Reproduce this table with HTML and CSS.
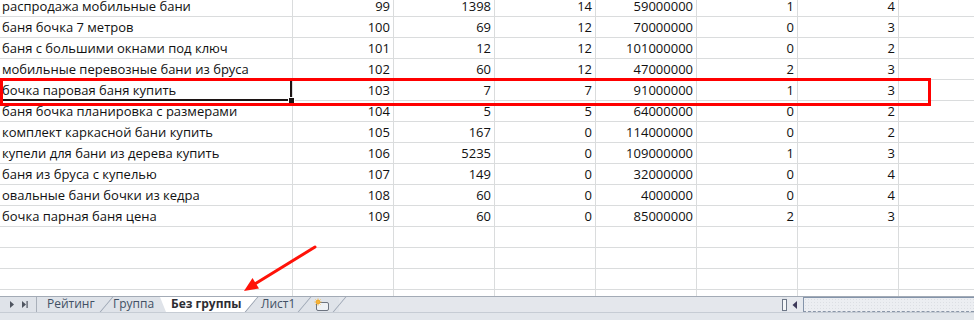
FILE: index.html
```html
<!DOCTYPE html>
<html>
<head>
<meta charset="utf-8">
<link rel="stylesheet" href="styles.css">
</head>
<body>
<div class="sheet">
  <div class="grid">
    <div class="t">распродажа мобильные бани</div><div class="n">99</div><div class="n">1398</div><div class="n">14</div><div class="n">59000000</div><div class="n">1</div><div class="n">4</div><div></div>
    <div class="t">баня бочка 7 метров</div><div class="n">100</div><div class="n">69</div><div class="n">12</div><div class="n">70000000</div><div class="n">0</div><div class="n">3</div><div></div>
    <div class="t">баня с большими окнами под ключ</div><div class="n">101</div><div class="n">12</div><div class="n">12</div><div class="n">101000000</div><div class="n">0</div><div class="n">2</div><div></div>
    <div class="t">мобильные перевозные бани из бруса</div><div class="n">102</div><div class="n">60</div><div class="n">12</div><div class="n">47000000</div><div class="n">2</div><div class="n">3</div><div></div>
    <div class="t">бочка паровая баня купить</div><div class="n">103</div><div class="n">7</div><div class="n">7</div><div class="n">91000000</div><div class="n">1</div><div class="n">3</div><div></div>
    <div class="t">баня бочка планировка с размерами</div><div class="n">104</div><div class="n">5</div><div class="n">5</div><div class="n">64000000</div><div class="n">0</div><div class="n">2</div><div></div>
    <div class="t">комплект каркасной бани купить</div><div class="n">105</div><div class="n">167</div><div class="n">0</div><div class="n">114000000</div><div class="n">0</div><div class="n">2</div><div></div>
    <div class="t">купели для бани из дерева купить</div><div class="n">106</div><div class="n">5235</div><div class="n">0</div><div class="n">109000000</div><div class="n">1</div><div class="n">3</div><div></div>
    <div class="t">баня из бруса с купелью</div><div class="n">107</div><div class="n">149</div><div class="n">0</div><div class="n">32000000</div><div class="n">0</div><div class="n">4</div><div></div>
    <div class="t">овальные бани бочки из кедра</div><div class="n">108</div><div class="n">60</div><div class="n">0</div><div class="n">4000000</div><div class="n">0</div><div class="n">4</div><div></div>
    <div class="t">бочка парная баня цена</div><div class="n">109</div><div class="n">60</div><div class="n">0</div><div class="n">85000000</div><div class="n">2</div><div class="n">3</div><div></div>
    <div></div><div></div><div></div><div></div><div></div><div></div><div></div><div></div>
    <div></div><div></div><div></div><div></div><div></div><div></div><div></div><div></div>
    <div></div><div></div><div></div><div></div><div></div><div></div><div></div><div></div>
    <div></div><div></div><div></div><div></div><div></div><div></div><div></div><div></div>
  </div>
  <div class="selection"><span class="handle"></span></div>
  <div class="redbox"></div>
  <svg class="arrow" width="974" height="296" viewBox="0 0 974 296">
    <line x1="315" y1="247" x2="254" y2="284.5" stroke="#ff1208" stroke-width="3" stroke-linecap="round"/>
    <polygon points="244,291 259,288.5 252.5,278" fill="#ff1208"/>
  </svg>
</div>
<div class="tabbar">
  <div class="nav">
    <svg width="36" height="15" viewBox="0 0 36 15">
      <polygon points="10,4 14,7.5 10,11" fill="#4f5560"/>
      <polygon points="22,4 26,7.5 22,11" fill="#4f5560"/>
      <rect x="26.5" y="4" width="1.2" height="7" fill="#4f5560"/>
    </svg>
  </div>
  <div class="tabs">
    <div class="tab t1 sep">Рейтинг</div>
    <div class="tab t2">Группа</div>
    <div class="tab active">Без группы</div>
    <div class="tab t4 sep lead">Лист1</div>
    <div class="tab t5 sep newtab">
      <svg width="17" height="14" viewBox="0 0 17 14">
        <rect x="3.5" y="4.5" width="12" height="8" rx="1.5" fill="#eef1f5" stroke="#6d7480"/>
        <circle cx="5" cy="4" r="2.2" fill="#f0a020"/>
        <path d="M5 0.5v7M1.5 4h7M2.5 1.5l5 5M7.5 1.5l-5 5" stroke="#f3b43c" stroke-width="0.9"/>
      </svg>
    </div>
  </div>
  <div class="hfill"></div>
  <div class="splitter"></div>
  <div class="leftbtn"><svg width="8" height="10" viewBox="0 0 8 10"><polygon points="6,1 1.5,5 6,9" fill="#3e3a5a"/></svg></div>
  <div class="track"></div>
</div>
<div class="status"></div>
</body>
</html>
```
FILE: styles.css
```css
html, body {
  margin: 0;
  padding: 0;
  width: 974px;
  height: 320px;
  overflow: hidden;
  background: #ffffff;
}

.sheet {
  position: relative;
  height: 296px;
  overflow: hidden;
}

.grid {
  display: grid;
  grid-template-columns: 292px repeat(6, 100px) 1fr;
  gap: 1px;
  background: #dadcdd;
  margin-top: -4px;
}

.grid > div {
  background: #ffffff;
  height: 20px;
  line-height: 21px;
  font-family: "Open Sans", sans-serif;
  font-size: 13px;
  color: #111111;
  white-space: nowrap;
  overflow: hidden;
}

.grid > .t {
  padding-left: 2px;
}

.grid > .n {
  text-align: right;
  padding-right: 3px;
}

.selection {
  position: absolute;
  left: -3px;
  top: 78px;
  width: 295px;
  height: 23px;
  box-sizing: border-box;
  border: 2px solid #1c1414;
}

.handle {
  position: absolute;
  right: -5px;
  bottom: -5px;
  width: 5px;
  height: 5px;
  background: #1c1414;
  border: 1px solid #ffffff;
}

.redbox {
  position: absolute;
  left: 0;
  top: 78px;
  width: 931px;
  height: 28px;
  box-sizing: border-box;
  border: 3px solid #ff0000;
}

.arrow {
  position: absolute;
  left: 0;
  top: 0;
}

.tabbar {
  display: flex;
  height: 15px;
  border-top: 1px solid #a3abb6;
  background: #dfe3e9;
  font-family: "Open Sans", sans-serif;
  font-size: 12px;
}

.nav {
  width: 36px;
  flex: none;
  border-right: 1px solid #a9b0ba;
}

.nav svg {
  display: block;
}

.tabs {
  display: flex;
  flex: none;
}

.tab {
  position: relative;
  box-sizing: border-box;
  height: 15px;
  line-height: 14px;
  color: #415064;
  flex: none;
  white-space: nowrap;
}

.tab.sep::after,
.tab.lead::before {
  content: "";
  position: absolute;
  top: 0;
  width: 1px;
  height: 15px;
  background: #98a2b0;
  transform: skewX(-40deg);
  z-index: 3;
}

.tab.sep::after { right: -1px; }
.tab.lead::before { left: -7px; background: #8f99a8; }

.t1 { width: 69px; padding-left: 10px; }
.t2 { width: 54px; padding-left: 7px; }
.t4 { width: 46px; padding-left: 3px; z-index: 2; }
.t5 { width: 35px; padding-left: 9px; }

.tab.active {
  width: 98px;
  padding-left: 11px;
  background: #ffffff;
  color: #2d2d33;
  font-weight: 700;
  clip-path: polygon(0 0, 100% 0, calc(100% - 13px) 100%, 6px 100%);
  z-index: 1;
}

.newtab svg {
  display: block;
  margin-top: 1px;
}

.hfill {
  flex: 1;
  background: #e4e7ec;
}

.splitter {
  width: 3px;
  flex: none;
  margin: 2px 0 1px;
  background: #f4f6f8;
  border: 1px solid #6e7888;
}

.leftbtn {
  width: 16px;
  flex: none;
  display: flex;
  align-items: center;
  justify-content: center;
  background: #e6e9ee;
}

.track {
  width: 171px;
  flex: none;
  box-sizing: border-box;
  border-left: 1px solid #8494aa;
  border-top: 1px solid #8494aa;
  border-bottom: 1px dashed #8a96a8;
  background-color: #eceef2;
  background-image: radial-gradient(#dcdfe4 0.6px, transparent 0.8px);
  background-size: 3px 3px;
}

.status {
  height: 8px;
  background: #e2e6eb;
  border-top: 1px solid #c6ccd4;
}
```
